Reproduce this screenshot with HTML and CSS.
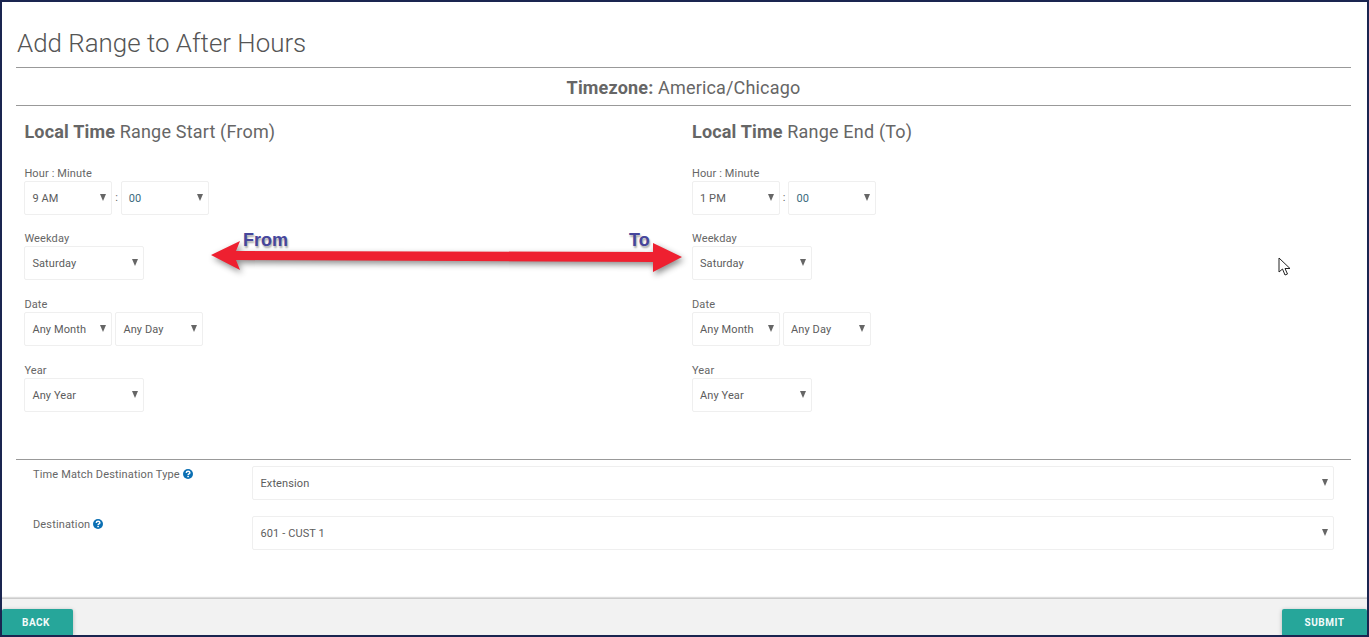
FILE: index.html
```html
<!DOCTYPE html>
<html lang="en">
<head>
<meta charset="utf-8">
<title>Add Range to After Hours</title>
<link rel="stylesheet" href="styles.css">
</head>
<body>
<div class="frame">
  <main class="content">
    <h1 class="title">Add Range to After Hours</h1>
    <div class="timezone"><b>Timezone:</b> America/Chicago</div>
    <div class="columns">
      <section class="col">
        <h2 class="col-title"><b>Local Time</b> Range Start (From)</h2>
        <div class="field">
          <label class="lbl">Hour : Minute</label>
          <div class="row">
            <div class="sel w88">9 AM</div><span class="colon">:</span><div class="sel w88 blue">00</div>
          </div>
        </div>
        <div class="field">
          <label class="lbl">Weekday</label>
          <div class="row"><div class="sel w120">Saturday</div></div>
        </div>
        <div class="field">
          <label class="lbl">Date</label>
          <div class="row gap3"><div class="sel w88">Any Month</div><div class="sel w88">Any Day</div></div>
        </div>
        <div class="field">
          <label class="lbl">Year</label>
          <div class="row"><div class="sel w120">Any Year</div></div>
        </div>
      </section>
      <section class="col">
        <h2 class="col-title"><b>Local Time</b> Range End (To)</h2>
        <div class="field">
          <label class="lbl">Hour : Minute</label>
          <div class="row">
            <div class="sel w88">1 PM</div><span class="colon">:</span><div class="sel w88 blue">00</div>
          </div>
        </div>
        <div class="field">
          <label class="lbl">Weekday</label>
          <div class="row"><div class="sel w120">Saturday</div></div>
        </div>
        <div class="field">
          <label class="lbl">Date</label>
          <div class="row gap3"><div class="sel w88">Any Month</div><div class="sel w88">Any Day</div></div>
        </div>
        <div class="field">
          <label class="lbl">Year</label>
          <div class="row"><div class="sel w120">Any Year</div></div>
        </div>
      </section>
    </div>
    <div class="dest">
      <div class="dest-row">
        <label class="dest-lbl">Time Match Destination Type
          <svg class="help" viewBox="0 0 10 10"><circle cx="5" cy="5" r="5" fill="#0b6fb3"/><path d="M3.2 3.9C3.3 2.8 4.1 2.2 5.1 2.2C6.2 2.2 6.9 2.9 6.9 3.7C6.9 4.9 5.1 4.9 5.1 6.1" fill="none" stroke="#fff" stroke-width="1.4"/><rect x="4.3" y="6.8" width="1.6" height="1.4" fill="#fff"/></svg>
        </label>
        <div class="sel wide">Extension</div>
      </div>
      <div class="dest-row">
        <label class="dest-lbl">Destination
          <svg class="help" viewBox="0 0 10 10"><circle cx="5" cy="5" r="5" fill="#0b6fb3"/><path d="M3.2 3.9C3.3 2.8 4.1 2.2 5.1 2.2C6.2 2.2 6.9 2.9 6.9 3.7C6.9 4.9 5.1 4.9 5.1 6.1" fill="none" stroke="#fff" stroke-width="1.4"/><rect x="4.3" y="6.8" width="1.6" height="1.4" fill="#fff"/></svg>
        </label>
        <div class="sel wide">601 - CUST 1</div>
      </div>
    </div>
  </main>
  <footer class="footer">
    <button class="btn back">BACK</button>
    <button class="btn submit">SUBMIT</button>
  </footer>
  <svg class="arrow" viewBox="0 0 480 40" width="480" height="40">
    <path d="M1 15L30 1L26 11L443 12L443 3L472 17L443 32L443 22L26 20L30 30Z" fill="#ee2030"/>
  </svg>
  <span class="note note-from">From</span>
  <span class="note note-to">To</span>
  <svg class="cursor" viewBox="0 0 14 20" width="14" height="20">
    <path d="M1 1L1 15L4.5 12L7 18L9.5 17L7 11.5L12 11.5Z" fill="#fff" stroke="#222" stroke-width="1"/>
  </svg>
</div>
</body>
</html>
```
FILE: styles.css
```css
* { box-sizing: border-box; }
html, body { margin: 0; height: 100%; }
body {
  font-family: Roboto, "Liberation Sans", sans-serif;
  color: #666;
  background: #fff;
}
.frame {
  position: relative;
  width: 1369px;
  height: 637px;
  border: 2px solid #1a2550;
  display: flex;
  flex-direction: column;
  overflow: hidden;
}
.content {
  flex: 1;
  padding: 0 16px 0 14px;
}
.title {
  margin: 0;
  height: 66px;
  padding: 24px 0 0 1px;
  font-size: 25.9px;
  line-height: 34px;
  font-weight: 300;
  color: #555;
  border-bottom: 1px solid #999;
}
.timezone {
  height: 38px;
  text-align: center;
  font-size: 18px;
  letter-spacing: 0.17px;
  line-height: 40px;
  color: #666;
  border-bottom: 1px solid #999;
}
.timezone b { font-weight: 700; }
.columns {
  display: grid;
  grid-template-columns: 667.6px 668px;
  height: 354px;
  border-bottom: 1px solid #999;
}
.col { padding: 0 8.4px; }
.col-title {
  margin: 0;
  height: 47.5px;
  padding-top: 14px;
  font-size: 18px;
  letter-spacing: 0.18px;
  line-height: 24px;
  font-weight: 400;
  color: #666;
}
.col-title b { font-weight: 700; }
.field { height: 65.7px; padding-top: 13px; }
.lbl {
  display: block;
  font-size: 11px;
  letter-spacing: 0.12px;
  line-height: 14px;
  height: 14px;
  color: #666;
}
.row { display: flex; align-items: center; }
.gap3 { gap: 3px; }
.colon { width: 8.4px; text-align: center; font-size: 11px; color: #666; }
.sel {
  position: relative;
  height: 34px;
  border: 1px solid #efefef;
  border-radius: 2px;
  padding: 0 7px;
  font-size: 11px;
  letter-spacing: 0.1px;
  line-height: 33px;
  color: #5c5c5c;
  background: #fff;
}
.sel::after {
  content: "";
  position: absolute;
  right: 5px;
  top: 12px;
  border-left: 3.5px solid transparent;
  border-right: 3.5px solid transparent;
  border-top: 7px solid #666;
}
.blue { color: #3a6a7c; }
.w88 { width: 88px; }
.w120 { width: 120px; }
.wide { flex: 1; padding: 0 7.5px; }
.dest { padding: 6px 0 0 17px; width: 1318px; }
.dest-row { display: flex; height: 50px; }
.dest-lbl {
  width: 219px;
  font-size: 11px;
  letter-spacing: 0.15px;
  line-height: 14px;
  color: #666;
  padding-top: 2px;
}
.help { width: 10px; height: 10px; vertical-align: -1px; }
.footer {
  height: 37px;
  background: #f2f2f2;
  border-top: 1px solid #ccc;
  box-shadow: 0 -1px 1px #ddd;
  display: flex;
  justify-content: space-between;
  align-items: flex-end;
}
.btn {
  height: 26px;
  border: 0;
  border-radius: 2px 2px 0 0;
  background: #26a69a;
  color: #f4fbfa;
  font-family: Roboto, sans-serif;
  font-size: 10px;
  font-weight: 700;
  letter-spacing: 0.5px;
  padding: 0;
  box-shadow: 0 1px 4px rgba(0,0,0,.25);
}
.back { width: 71px; padding-right: 3px; }
.submit { width: 85px; }
.arrow {
  position: absolute;
  left: 208px;
  top: 238px;
  filter: drop-shadow(2px 3px 3px rgba(0,0,0,.45));
}
.note {
  position: absolute;
  font-family: "Liberation Sans", sans-serif;
  font-weight: 700;
  font-size: 18px;
  line-height: 20px;
  color: #46469c;
  text-shadow: 1px 2px 2px rgba(0,0,0,.35);
}
.note-from { left: 241px; top: 228px; }
.note-to { left: 627px; top: 228px; }
.cursor { position: absolute; left: 1276px; top: 255px; }
```
